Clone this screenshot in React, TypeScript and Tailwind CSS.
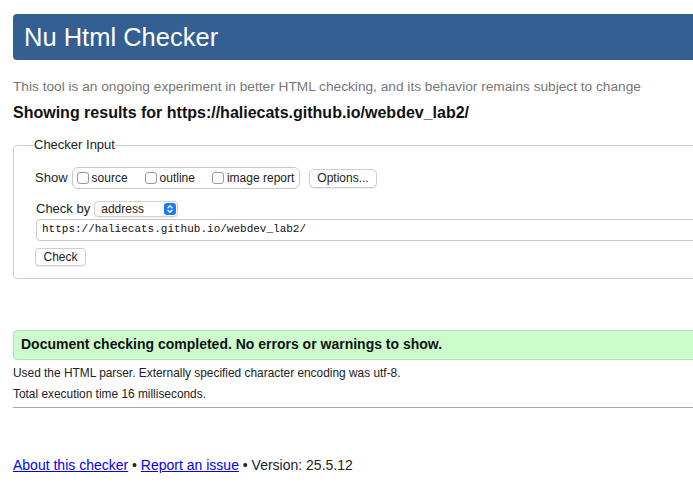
import React from 'react';

const sans = { fontFamily: '"Liberation Sans", Arial, Helvetica, sans-serif' };
const mono = { fontFamily: '"Liberation Mono", "DejaVu Sans Mono", monospace' };

function Box({ label }: { label: string }) {
  return (
    <label className="flex items-center gap-[3px]">
      <span className="w-[12px] h-[12px] rounded-[3px] border border-[#9a9a9a] bg-white" />
      <span>{label}</span>
    </label>
  );
}

export default function App() {
  return (
    <div className="w-[693px] h-[489px] overflow-hidden bg-white text-[#111]" style={sans}>
      <div className="ml-[13px] w-[820px] pt-[14px]">
        {/* 标题栏 */}
        <h1 className="h-[46px] rounded-[4px] bg-[#345f92] text-white text-[25.5px] leading-[46px] pl-[11px]">
          Nu Html Checker
        </h1>

        <p className="mt-[19px] text-[13.7px] leading-[16px] text-[#777]">
          This tool is an ongoing experiment in better HTML checking, and its behavior remains subject to change
        </p>
        <p className="mt-[8px] text-[16px] leading-[20px] font-bold text-[#111]">
          Showing results for https://haliecats.github.io/webdev_lab2/
        </p>

        {/* 输入区域 */}
        <fieldset className="mt-[14px] border border-[#ccc] rounded-[4px] pl-[21px] pb-[10px]">
          <legend className="text-[13px] leading-[16px] text-[#222] -ml-[1px] px-[0px]">Checker Input</legend>

          <div className="mt-[14px] flex items-center text-[13px] text-[#222]">
            <span className="mr-[4px]">Show</span>
            <div className="h-[22px] flex items-center gap-[17px] border border-[#c8c8c8] rounded-[6px] pl-[4px] pr-[5px] text-[12px]">
              <Box label="source" />
              <Box label="outline" />
              <Box label="image report" />
            </div>
            <button className="ml-[9px] h-[19px] px-[7px] border border-[#cfcfcf] rounded-[5px] bg-white text-[12px] leading-[17px] shadow-[0_1px_1px_rgba(0,0,0,0.08)]">
              Options...
            </button>
          </div>

          <div className="mt-[10px] flex items-center text-[13px] text-[#222]">
            <span className="mr-[4px] ml-[1px]">Check by</span>
            <div className="w-[84px] h-[16px] flex items-center justify-between border border-[#d0d0d0] rounded-[4px] pl-[6px] pr-[1px] text-[12px] bg-white shadow-[0_1px_1px_rgba(0,0,0,0.06)]">
              <span>address</span>
              <span className="w-[12px] h-[12px] rounded-[3px] bg-[#1a7cf5] flex items-center justify-center">
                <svg width="8" height="10" viewBox="0 0 8 10" fill="none" stroke="white" strokeWidth="1.4" strokeLinecap="round" strokeLinejoin="round">
                  <path d="M2 3.8 L4 1.8 L6 3.8" />
                  <path d="M2 6.2 L4 8.2 L6 6.2" />
                </svg>
              </span>
            </div>
          </div>

          <div className="mt-[0px] ml-[1px] h-[22px] flex items-center border border-[#c8c8c8] rounded-[4px] px-[5px] text-[11px] text-[#111]" style={mono}>
            https://haliecats.github.io/webdev_lab2/
          </div>

          <button className="mt-[7px] h-[18px] w-[51px] border border-[#cfcfcf] rounded-[4px] bg-white text-[12px] leading-[16px] text-[#222] shadow-[0_1px_1px_rgba(0,0,0,0.08)]">
            Check
          </button>
        </fieldset>

        {/* 结果 */}
        <div className="mt-[51px] h-[30px] flex items-center border border-[#b9dcb9] rounded-[4px] bg-[#ccfccc] pl-[7px] text-[14px] font-bold text-[#111]">
          Document checking completed. No errors or warnings to show.
        </div>
        <p className="mt-[5px] text-[11.9px] leading-[16px] text-[#222]">
          Used the HTML parser. Externally specified character encoding was utf-8.
        </p>
        <p className="mt-[5px] text-[11.9px] leading-[16px] text-[#222]">Total execution time 16 milliseconds.</p>
        <hr className="mt-[5px] border-0 border-t border-[#aaa]" />

        <p className="mt-[48px] text-[14px] leading-[18px] text-[#222]">
          <a href="#" className="text-[#0000ee] underline">About this checker</a>
          {' • '}
          <a href="#" className="text-[#0000ee] underline">Report an issue</a>
          {' • Version: 25.5.12'}
        </p>
      </div>
    </div>
  );
}
